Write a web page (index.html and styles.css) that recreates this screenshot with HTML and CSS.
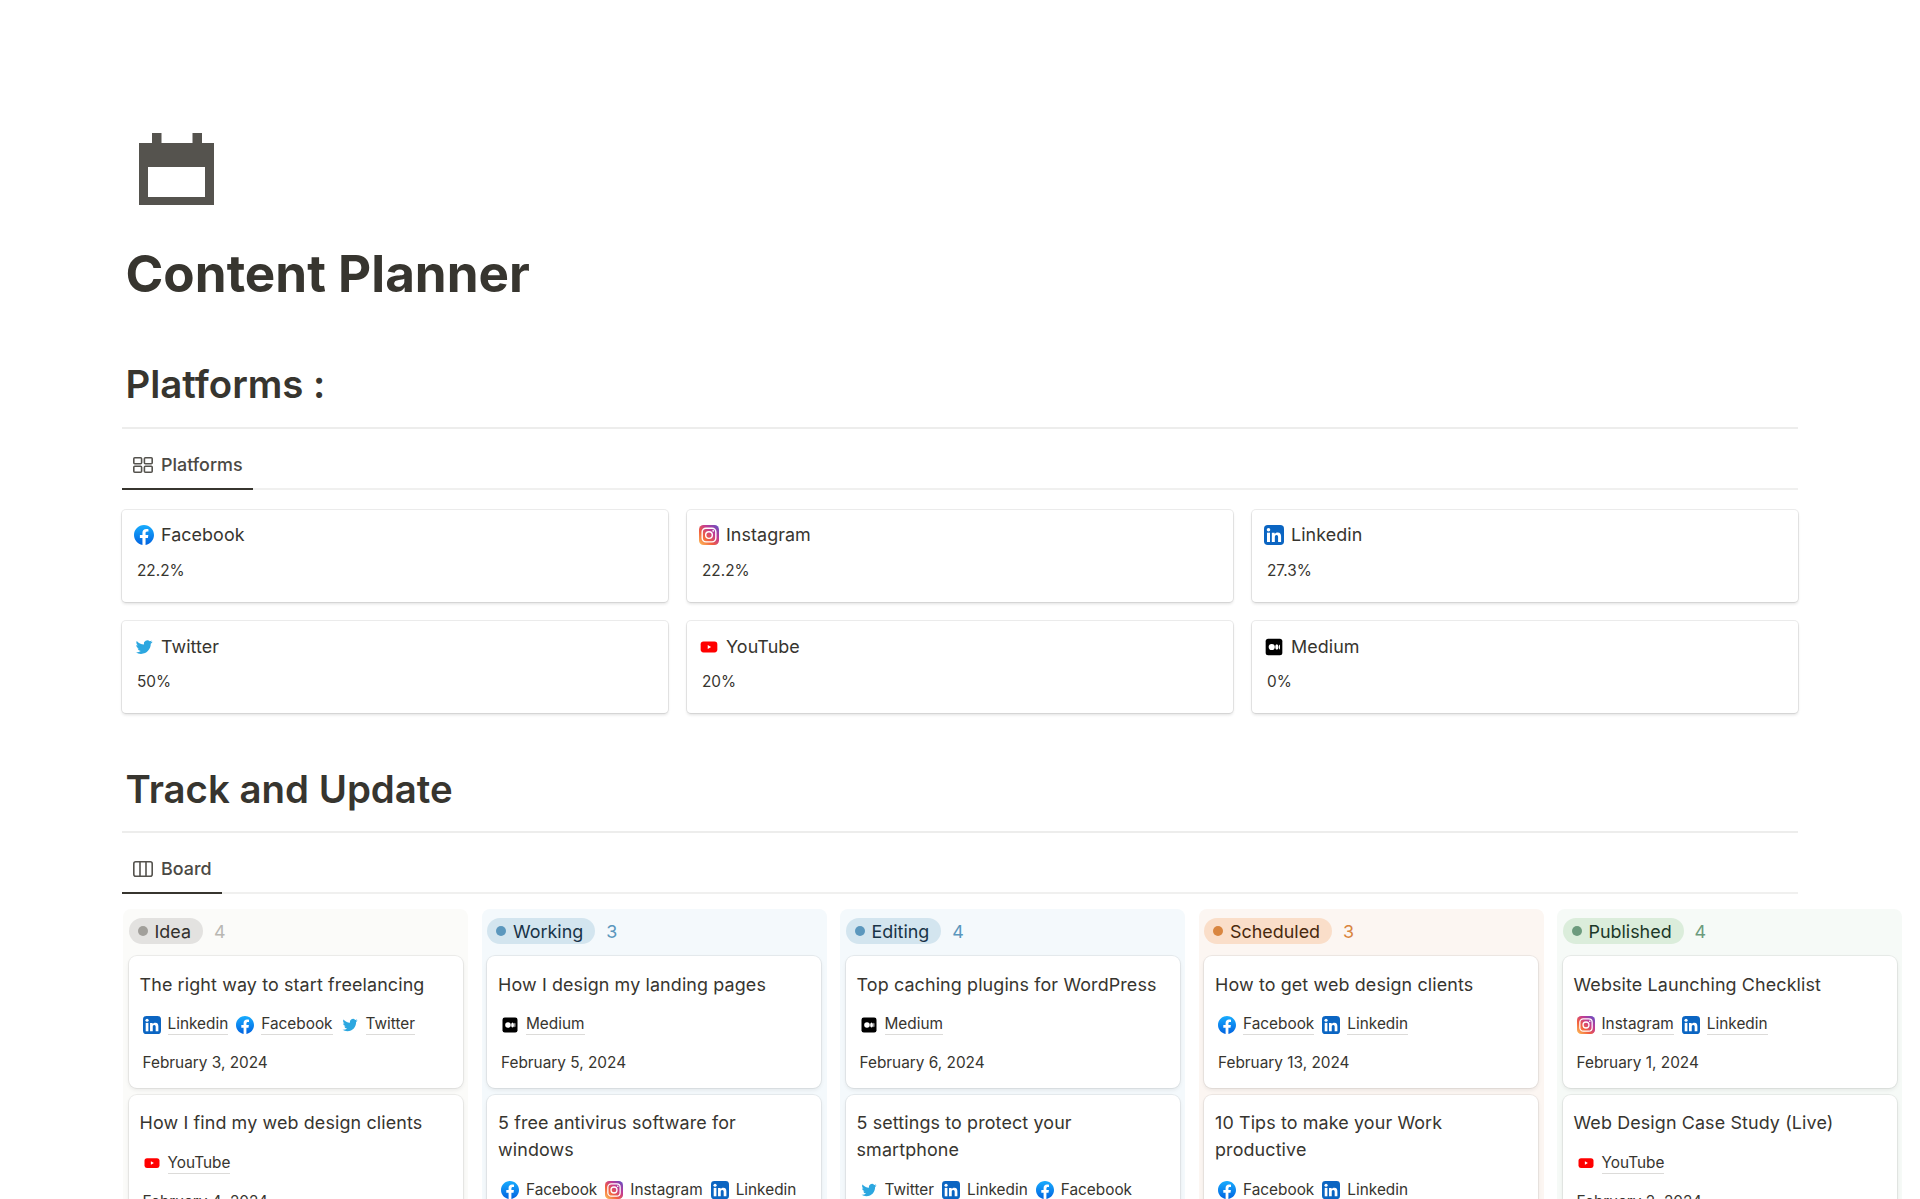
FILE: index.html
```html
<!DOCTYPE html>
<html lang="en">
<head>
<meta charset="utf-8">
<title>Content Planner</title>
<link rel="stylesheet" href="styles.css">
</head>
<body>
<svg class="sprite" aria-hidden="true">
  <defs>
    <linearGradient id="fbg" x1="0" y1="0" x2="0" y2="1"><stop offset="0" stop-color="#18acfe"/><stop offset="1" stop-color="#0163e0"/></linearGradient>
    <linearGradient id="igg" x1="0" y1="1" x2="1" y2="0"><stop offset="0" stop-color="#fdc25b"/><stop offset=".35" stop-color="#f2603e"/><stop offset=".65" stop-color="#c13a94"/><stop offset="1" stop-color="#5b51c9"/></linearGradient>
    <symbol id="i-facebook" viewBox="0 0 24 24"><circle cx="12" cy="12" r="12" fill="#fff"/><path fill="url(#fbg)" d="M24 12.073c0-6.627-5.373-12-12-12s-12 5.373-12 12c0 5.99 4.388 10.954 10.125 11.854v-8.385H7.078v-3.47h3.047V9.43c0-3.007 1.792-4.669 4.533-4.669 1.312 0 2.686.235 2.686.235v2.953H15.83c-1.491 0-1.956.925-1.956 1.874v2.25h3.328l-.532 3.47h-2.796v8.385C19.612 23.027 24 18.062 24 12.073z"/></symbol>
    <symbol id="i-instagram" viewBox="0 0 24 24"><rect width="24" height="24" rx="5.5" fill="url(#igg)"/><rect x="3.8" y="3.8" width="16.4" height="16.4" rx="4.6" fill="none" stroke="#fff" stroke-width="1.7"/><circle cx="12" cy="12" r="4" fill="none" stroke="#fff" stroke-width="1.7"/><circle cx="17" cy="7" r="1.1" fill="#fff"/></symbol>
    <symbol id="i-linkedin" viewBox="0 0 24 24"><rect width="24" height="24" rx="4.500" fill="#0b65c2"/><rect x="3.6" y="9.2" width="3.6" height="11.2" fill="#fff"/><circle cx="5.4" cy="5.6" r="2.1" fill="#fff"/><path fill="#fff" d="M9.4 9.2h3.4v1.6c.6-1.1 2-1.9 3.6-1.9 3.3 0 4.1 2.1 4.1 5v6.5h-3.6v-5.7c0-1.4-.2-2.8-1.9-2.8s-2 1.3-2 2.7v5.8H9.4z"/></symbol>
    <symbol id="i-twitter" viewBox="0 0 24 24"><path fill="#2ca7e0" transform="translate(2 2) scale(.84)" d="M23.953 4.57a10 10 0 01-2.825.775 4.958 4.958 0 002.163-2.723c-.951.555-2.005.959-3.127 1.184a4.92 4.92 0 00-8.384 4.482C7.69 8.095 4.067 6.13 1.64 3.162a4.822 4.822 0 00-.666 2.475c0 1.71.87 3.213 2.188 4.096a4.904 4.904 0 01-2.228-.616v.06a4.923 4.923 0 003.946 4.827 4.996 4.996 0 01-2.212.085 4.936 4.936 0 004.604 3.417 9.867 9.867 0 01-6.102 2.105c-.39 0-.779-.023-1.17-.067a13.995 13.995 0 007.557 2.209c9.053 0 13.998-7.496 13.998-13.985 0-.21 0-.42-.015-.63A9.935 9.935 0 0024 4.59z"/></symbol>
    <symbol id="i-youtube" viewBox="0 0 24 24"><rect x="2" y="5.500" width="20" height="13" rx="3.400" fill="#f00"/><path fill="#fff" d="M10.500 9.700l4 2.300-4 2.300z"/></symbol>
    <symbol id="i-medium" viewBox="0 0 24 24"><rect x="2" y="2" width="20" height="20" rx="3" fill="#000"/><ellipse cx="9.3" cy="12" rx="3.7" ry="3.7" fill="#fff"/><ellipse cx="15.4" cy="12" rx="1.9" ry="3.4" fill="#fff"/><ellipse cx="18.5" cy="12" rx=".7" ry="3" fill="#fff"/></symbol>
  </defs>
</svg>

<main class="page">
  <svg class="page-icon" viewBox="0 0 75 72" aria-hidden="true"><path fill="#55534e" fill-rule="evenodd" d="M13 0h9.500v10h31V0H63v10h12v62H0V10h13zM9 34v30h57V34z"/></svg>
  <h1 class="title">Content Planner</h1>

  <h2 class="heading heading-first">Platforms :</h2>
  <div class="tabs">
    <div class="tab tab-gallery">
      <svg class="tab-icon" viewBox="0 0 20 16" aria-hidden="true"><g fill="none" stroke="#55534e" stroke-width="1.600"><rect x=".8" y=".8" width="7.800" height="5.900" rx="1"/><rect x="11.400" y=".8" width="7.800" height="5.900" rx="1"/><rect x=".8" y="9.300" width="7.800" height="5.900" rx="1"/><rect x="11.400" y="9.300" width="7.800" height="5.900" rx="1"/></g></svg>
      <span>Platforms</span>
    </div>
  </div>
  <section class="gallery">
    <article class="gcard"><div class="gname"><svg class="gicon"><use href="#i-facebook"/></svg>Facebook</div><div class="gval">22.2%</div></article>
    <article class="gcard"><div class="gname"><svg class="gicon"><use href="#i-instagram"/></svg>Instagram</div><div class="gval">22.2%</div></article>
    <article class="gcard"><div class="gname"><svg class="gicon"><use href="#i-linkedin"/></svg>Linkedin</div><div class="gval">27.3%</div></article>
    <article class="gcard"><div class="gname"><svg class="gicon"><use href="#i-twitter"/></svg>Twitter</div><div class="gval">50%</div></article>
    <article class="gcard"><div class="gname"><svg class="gicon"><use href="#i-youtube"/></svg>YouTube</div><div class="gval">20%</div></article>
    <article class="gcard"><div class="gname"><svg class="gicon"><use href="#i-medium"/></svg>Medium</div><div class="gval">0%</div></article>
  </section>

  <h2 class="heading heading-second">Track and Update</h2>
  <div class="tabs">
    <div class="tab tab-board">
      <svg class="tab-icon" viewBox="0 0 20 16" aria-hidden="true"><g fill="none" stroke="#55534e" stroke-width="1.600"><rect x=".8" y=".8" width="18.400" height="14.400" rx="2"/><path d="M7 .8v14.400M13 .8v14.400"/></g></svg>
      <span>Board</span>
    </div>
  </div>

  <section class="board">
    <div class="col col-gray">
      <header class="col-head"><span class="badge"><i class="dot"></i>Idea</span><span class="count">4</span></header>
      <article class="card">
        <div class="card-title">The right way to start freelancing</div>
        <div class="links">
          <span class="link"><svg class="licon"><use href="#i-linkedin"/></svg><u>Linkedin</u></span>
          <span class="link"><svg class="licon"><use href="#i-facebook"/></svg><u>Facebook</u></span>
          <span class="link"><svg class="licon"><use href="#i-twitter"/></svg><u>Twitter</u></span>
        </div>
        <div class="date">February 3, 2024</div>
      </article>
      <article class="card">
        <div class="card-title">How I find my web design clients</div>
        <div class="links"><span class="link"><svg class="licon"><use href="#i-youtube"/></svg><u>YouTube</u></span></div>
        <div class="date">February 4, 2024</div>
      </article>
    </div>

    <div class="col col-blue">
      <header class="col-head"><span class="badge"><i class="dot"></i>Working</span><span class="count">3</span></header>
      <article class="card">
        <div class="card-title">How I design my landing pages</div>
        <div class="links"><span class="link"><svg class="licon"><use href="#i-medium"/></svg><u>Medium</u></span></div>
        <div class="date">February 5, 2024</div>
      </article>
      <article class="card">
        <div class="card-title">5 free antivirus software for windows</div>
        <div class="links">
          <span class="link"><svg class="licon"><use href="#i-facebook"/></svg><u>Facebook</u></span>
          <span class="link"><svg class="licon"><use href="#i-instagram"/></svg><u>Instagram</u></span>
          <span class="link"><svg class="licon"><use href="#i-linkedin"/></svg><u>Linkedin</u></span>
        </div>
      </article>
    </div>

    <div class="col col-blue">
      <header class="col-head"><span class="badge"><i class="dot"></i>Editing</span><span class="count">4</span></header>
      <article class="card">
        <div class="card-title">Top caching plugins for WordPress</div>
        <div class="links"><span class="link"><svg class="licon"><use href="#i-medium"/></svg><u>Medium</u></span></div>
        <div class="date">February 6, 2024</div>
      </article>
      <article class="card">
        <div class="card-title">5 settings to protect your smartphone</div>
        <div class="links">
          <span class="link"><svg class="licon"><use href="#i-twitter"/></svg><u>Twitter</u></span>
          <span class="link"><svg class="licon"><use href="#i-linkedin"/></svg><u>Linkedin</u></span>
          <span class="link"><svg class="licon"><use href="#i-facebook"/></svg><u>Facebook</u></span>
        </div>
      </article>
    </div>

    <div class="col col-orange">
      <header class="col-head"><span class="badge"><i class="dot"></i>Scheduled</span><span class="count">3</span></header>
      <article class="card">
        <div class="card-title">How to get web design clients</div>
        <div class="links">
          <span class="link"><svg class="licon"><use href="#i-facebook"/></svg><u>Facebook</u></span>
          <span class="link"><svg class="licon"><use href="#i-linkedin"/></svg><u>Linkedin</u></span>
        </div>
        <div class="date">February 13, 2024</div>
      </article>
      <article class="card">
        <div class="card-title">10 Tips to make your Work productive</div>
        <div class="links">
          <span class="link"><svg class="licon"><use href="#i-facebook"/></svg><u>Facebook</u></span>
          <span class="link"><svg class="licon"><use href="#i-linkedin"/></svg><u>Linkedin</u></span>
        </div>
      </article>
    </div>

    <div class="col col-green">
      <header class="col-head"><span class="badge"><i class="dot"></i>Published</span><span class="count">4</span></header>
      <article class="card">
        <div class="card-title">Website Launching Checklist</div>
        <div class="links">
          <span class="link"><svg class="licon"><use href="#i-instagram"/></svg><u>Instagram</u></span>
          <span class="link"><svg class="licon"><use href="#i-linkedin"/></svg><u>Linkedin</u></span>
        </div>
        <div class="date">February 1, 2024</div>
      </article>
      <article class="card">
        <div class="card-title">Web Design Case Study (Live)</div>
        <div class="links"><span class="link"><svg class="licon"><use href="#i-youtube"/></svg><u>YouTube</u></span></div>
        <div class="date">February 2, 2024</div>
      </article>
    </div>
  </section>
</main>
</body>
</html>
```
FILE: styles.css
```css
* { box-sizing: border-box; }
html, body { margin: 0; height: 100%; overflow: hidden; background: #fff; }
body { font-family: Inter, "Liberation Sans", sans-serif; color: #37352f; }
.sprite { position: absolute; width: 0; height: 0; }

.page { width: 1676px; margin-left: 122px; padding-top: 133px; }
.page-icon { display: block; width: 75px; height: 72px; margin-left: 17px; }
.title { margin: 39px 0 0; padding-left: 3.5px; font-size: 51.2px; line-height: 58px; font-weight: 700; }
.heading { margin: 0; padding: 0 0 20px 3.5px; font-size: 38.4px; line-height: 46px; font-weight: 600; border-bottom: 2px solid #ededec; }
.heading-first { margin-top: 59px; }
.heading-second { margin-top: 53px; padding-bottom: 19px; }

.tabs { height: 61px; display: flex; align-items: flex-end; border-bottom: 2px solid #f0f0ef; }
.tab { height: 61px; margin-bottom: -2px; display: flex; align-items: center; gap: 8px; padding: 12px 10px 0 11px; font-size: 17.92px; font-weight: 500; color: #4b4944; border-bottom: 2px solid #37352f; }
.tab-icon { width: 20px; height: 16px; flex: none; }

.gallery { display: grid; grid-template-columns: repeat(3, 546px); grid-auto-rows: 92px; gap: 19px; margin-top: 20px; }
.gcard { background: #fff; border-radius: 4px; padding: 13.500px 12px 0 12px; box-shadow: 0 0 0 1px rgba(15,15,15,.08), 0 2px 3px rgba(15,15,15,.12); }
.gcard:nth-child(n+4) { padding-top: 14.500px; }
.gcard:nth-child(n+4) .gval { margin-top: 13.500px; }
.gname { display: flex; align-items: center; gap: 7px; height: 22px; font-size: 17.92px; letter-spacing: .06px; }
.gicon { width: 20px; height: 20px; flex: none; }
.gval { margin: 14.500px 0 0 3px; font-size: 15.36px; line-height: 22px; }

.board { display: flex; gap: 13.500px; width: 1780px; margin: 15px 0 0 1px; }
.col { flex: none; width: 345px; height: 320px; border-radius: 8px; padding: 0 5.500px; }
.col-head { height: 47px; display: flex; align-items: flex-start; padding: 9px 3px 0 0; }
.badge { display: inline-flex; align-items: center; gap: 7px; height: 26px; padding: 0 12px 0 9px; border-radius: 13px; font-size: 17.92px; font-weight: 400; }
.dot { width: 10px; height: 10px; border-radius: 50%; display: block; }
.count { margin-left: 11px; font-size: 17.92px; line-height: 26px; position: relative; top: 1px; }

.col-gray { background: #fbfbf9; }
.col-gray .badge { background: #e3e2e0; color: #32302c; }
.col-gray .dot { background: #a19f9a; }
.col-gray .count { color: #b9b7b2; }
.col-blue { background: #f4f9fc; }
.col-blue .badge { background: #d3e5ef; color: #183347; }
.col-blue .dot { background: #5b97bd; }
.col-blue .count { color: #5b97bd; }
.col-orange { background: #fcf6f2; }
.col-orange .badge { background: #fadec9; color: #49290e; }
.col-orange .dot { background: #d9853f; }
.col-orange .count { color: #d9853f; }
.col-green { background: #f6faf7; }
.col-green .badge { background: #dbeddb; color: #1c3829; }
.col-green .dot { background: #6c9b7d; }
.col-green .count { color: #6c9b7d; }

.card { background: #fff; border-radius: 8px; padding: 15px 11px 0; height: 132px; margin-bottom: 7px; box-shadow: 0 0 0 1px rgba(15,15,15,.06), 0 2px 4px rgba(15,15,15,.08); }
.card:last-child { height: 200px; padding-top: 14px; }
.card:last-child .links { margin-top: 15px; }
.card-title { font-size: 17.92px; line-height: 27px; font-weight: 400; letter-spacing: .12px; }
.links { display: flex; align-items: center; gap: 8px; height: 24px; margin: 14.500px 0 0 3px; }
.link { display: inline-flex; align-items: center; gap: 7px; font-size: 15.36px; }
.link u { text-decoration: none; border-bottom: 1px solid #dcdbd9; line-height: 20px; height: 21px; display: block; }
.licon { width: 18px; height: 18px; flex: none; }
.date { margin: 15.500px 0 0 3px; font-size: 15.36px; line-height: 22px; }
```
